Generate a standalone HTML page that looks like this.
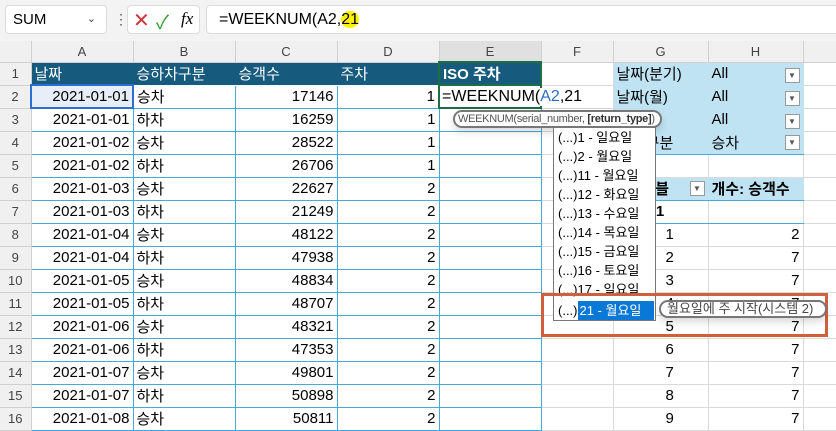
<!DOCTYPE html>
<html><head><meta charset="utf-8"><style>
*{box-sizing:border-box;margin:0;padding:0}
body{width:836px;height:416px;overflow:hidden;background:#fff;font-family:"Liberation Sans","Noto Sans CJK KR",sans-serif;position:relative}
.top{position:absolute;left:0;top:0;width:836px;height:41px;background:#f3f3f3}
.box{position:absolute;background:#fff;border:1px solid #dcdcdc;border-radius:4px}
table{position:absolute;left:0;top:41px;border-collapse:collapse;table-layout:fixed;width:843px}
td{height:23px;border-right:1px solid #dadada;border-bottom:1px solid #dadada;font-size:15px;padding:0 3px;white-space:nowrap;overflow:hidden;color:#000}
tr.h td{height:21px;background:#f0f0f0;text-align:center;font-size:13px;color:#444;border-color:#d0d0d0}
td.rn{background:#f0f0f0;text-align:center;font-size:13px;color:#444;border-color:#d0d0d0}
.r{text-align:right}
.bl{border-right-color:#47a8dc;border-bottom-color:#47a8dc}
.hd{background:#165a7e;color:#fff;border-right-color:#165a7e;border-bottom-color:#fff}
.pv{background:#bfe3f3;border-right-color:#bfe3f3;border-bottom-color:#bfe3f3}
.dd{display:inline-block;width:15px;height:15px;border:1px solid #999;background:#fff;float:right;margin-top:3px;font-size:8px;text-align:center;line-height:13px;color:#555}
.list{position:absolute;left:553px;top:127px;width:103px;height:194px;background:#fff;border:1px solid #777;font-size:13px;white-space:nowrap;overflow:hidden}
.list div{height:19px;line-height:19px;padding-left:4px}
</style></head><body>
<div class="top"></div>
<div class="box" style="left:5px;top:5px;width:102px;height:29px;font-size:15px;line-height:27px;padding-left:7px">SUM<span style="position:absolute;right:10px;top:0;font-size:11px;color:#444">&#8964;</span></div>
<div style="position:absolute;left:114px;top:11px;color:#555;font-size:14px">&#8942;</div>
<div class="box" style="left:127px;top:5px;width:73px;height:29px">
<span style="position:absolute;left:5px;top:2px;color:#d13438;font-size:20px">&#10005;</span>
<span style="position:absolute;left:28px;top:2px;color:#3a9a3a;font-size:19px">&#10003;</span>
<span style="position:absolute;left:53px;top:3px;font-family:'Liberation Serif',serif;font-style:italic;font-size:17px">fx</span></div>
<div class="box" style="left:206px;top:5px;width:640px;height:29px;font-size:16px;line-height:27px;padding-left:12px">=WEEKNUM(A2,<span style="background:#fff200;border-radius:9px">21</span></div>
<table>
<colgroup><col style="width:31px"><col style="width:102px"><col style="width:102px"><col style="width:102px"><col style="width:102px"><col style="width:102px"><col style="width:72px"><col style="width:95px"><col style="width:95px"><col style="width:40px"></colgroup>
<tr class="h"><td></td><td>A</td><td>B</td><td>C</td><td>D</td><td style="background:#e0e0e0">E</td><td>F</td><td>G</td><td>H</td><td></td></tr>
<tr><td class="rn">1</td><td class="hd">날짜</td><td class="hd">승하차구분</td><td class="hd">승객수</td><td class="hd">주차</td><td class="hd" style="font-weight:bold;border:2px solid #1f6e43;border-bottom:1px solid #fff">ISO 주차</td><td></td><td class="pv">날짜(분기)</td><td class="pv">All<span class="dd">▼</span></td><td></td></tr>
<tr><td class="rn">2</td><td class="r bl" style="background:#e8eef8;border:2px solid #2d6fd0">2021-01-01</td><td class="bl">승차</td><td class="r bl">17146</td><td class="r bl">1</td><td class="bl" style="border:2px solid #1f6e43;font-size:16px;padding-left:2px;overflow:visible;position:relative"><span style="position:absolute;left:2px;top:2px;background:#fff;padding-right:2px">=WEEKNUM(<span style="color:#2b6cc4">A2</span>,21</span></td><td></td><td class="pv">날짜(월)</td><td class="pv">All<span class="dd">▼</span></td><td></td></tr>
<tr><td class="rn">3</td><td class="r bl">2021-01-01</td><td class="bl">하차</td><td class="r bl">16259</td><td class="r bl">1</td><td class="bl"></td><td></td><td class="pv"></td><td class="pv">All<span class="dd">▼</span></td><td></td></tr>
<tr><td class="rn">4</td><td class="r bl">2021-01-02</td><td class="bl">승차</td><td class="r bl">28522</td><td class="r bl">1</td><td class="bl"></td><td></td><td class="pv" style="border-bottom-color:#47a8dc">&nbsp;&nbsp;&nbsp;&nbsp;&nbsp;&nbsp;&nbsp;구분</td><td class="pv" style="border-bottom-color:#47a8dc">승차<span class="dd">▼</span></td><td></td></tr>
<tr><td class="rn">5</td><td class="r bl">2021-01-02</td><td class="bl">하차</td><td class="r bl">26706</td><td class="r bl">1</td><td class="bl"></td><td></td><td></td><td></td><td></td></tr>
<tr><td class="rn">6</td><td class="r bl">2021-01-03</td><td class="bl">승차</td><td class="r bl">22627</td><td class="r bl">2</td><td class="bl"></td><td></td><td class="pv" style="font-weight:bold;border-bottom-color:#47a8dc">&nbsp;&nbsp;&nbsp;&nbsp;&nbsp;&nbsp;이블<span class="dd" style="font-weight:normal">▼</span></td><td class="pv" style="font-weight:bold;border-bottom-color:#47a8dc">개수: 승객수</td><td></td></tr>
<tr><td class="rn">7</td><td class="r bl">2021-01-03</td><td class="bl">하차</td><td class="r bl">21249</td><td class="r bl">2</td><td class="bl"></td><td></td><td style="font-weight:bold;border-bottom-color:#47a8dc;padding-left:34px">21</td><td style="border-bottom-color:#47a8dc"></td><td></td></tr>
<tr><td class="rn">8</td><td class="r bl">2021-01-04</td><td class="bl">승차</td><td class="r bl">48122</td><td class="r bl">2</td><td class="bl"></td><td></td><td style="padding-left:52px">1</td><td class="r">2</td><td></td></tr>
<tr><td class="rn">9</td><td class="r bl">2021-01-04</td><td class="bl">하차</td><td class="r bl">47938</td><td class="r bl">2</td><td class="bl"></td><td></td><td style="padding-left:52px">2</td><td class="r">7</td><td></td></tr>
<tr><td class="rn">10</td><td class="r bl">2021-01-05</td><td class="bl">승차</td><td class="r bl">48834</td><td class="r bl">2</td><td class="bl"></td><td></td><td style="padding-left:52px">3</td><td class="r">7</td><td></td></tr>
<tr><td class="rn">11</td><td class="r bl">2021-01-05</td><td class="bl">하차</td><td class="r bl">48707</td><td class="r bl">2</td><td class="bl"></td><td></td><td style="padding-left:52px">4</td><td class="r">7</td><td></td></tr>
<tr><td class="rn">12</td><td class="r bl">2021-01-06</td><td class="bl">승차</td><td class="r bl">48321</td><td class="r bl">2</td><td class="bl"></td><td></td><td style="padding-left:52px">5</td><td class="r">7</td><td></td></tr>
<tr><td class="rn">13</td><td class="r bl">2021-01-06</td><td class="bl">하차</td><td class="r bl">47353</td><td class="r bl">2</td><td class="bl"></td><td></td><td style="padding-left:52px">6</td><td class="r">7</td><td></td></tr>
<tr><td class="rn">14</td><td class="r bl">2021-01-07</td><td class="bl">승차</td><td class="r bl">49801</td><td class="r bl">2</td><td class="bl"></td><td></td><td style="padding-left:52px">7</td><td class="r">7</td><td></td></tr>
<tr><td class="rn">15</td><td class="r bl">2021-01-07</td><td class="bl">하차</td><td class="r bl">50898</td><td class="r bl">2</td><td class="bl"></td><td></td><td style="padding-left:52px">8</td><td class="r">7</td><td></td></tr>
<tr><td class="rn">16</td><td class="r bl">2021-01-08</td><td class="bl">승차</td><td class="r bl">50811</td><td class="r bl">2</td><td class="bl"></td><td></td><td style="padding-left:52px">9</td><td class="r">7</td><td></td></tr>
</table>
<div style="position:absolute;left:453px;top:110px;height:18px;border:2px solid #777;border-radius:9px;background:#fff;font-size:11px;line-height:14px;padding:0 5px 0 3px;color:#555;white-space:nowrap;letter-spacing:-0.3px;box-shadow:0 4px 8px rgba(0,0,0,.15)">WEEKNUM(serial_number, <b style="color:#333">[return_type]</b>)</div>
<div class="list">
<div>(...)1 - 일요일</div><div>(...)2 - 월요일</div><div>(...)11 - 월요일</div><div>(...)12 - 화요일</div><div>(...)13 - 수요일</div><div>(...)14 - 목요일</div><div>(...)15 - 금요일</div><div>(...)16 - 토요일</div><div>(...)17 - 일요일</div><div style="margin-top:2px">(...)<span style="background:#0a78d7;color:#fff;display:inline-block;width:76px;padding-left:2px">21 - 월요일</span></div>
</div>
<div style="position:absolute;left:541px;top:293px;width:287px;height:44px;border:3px solid #d0603d"></div>
<div style="position:absolute;left:659px;top:300px;width:168px;height:18px;border:2px solid #777;border-radius:9px;background:#fff;font-size:13px;line-height:14px;padding-left:6px;color:#444;white-space:nowrap;box-shadow:0 4px 8px rgba(0,0,0,.15)">월요일에 주 시작(시스템 2)</div>
</body></html>
